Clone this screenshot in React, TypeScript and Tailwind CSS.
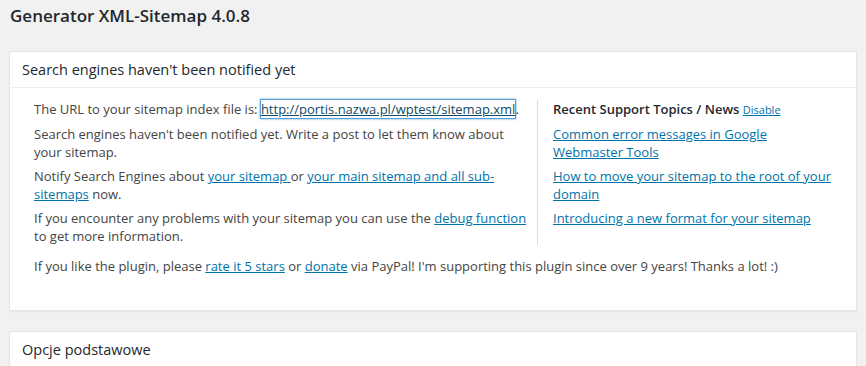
const linkCls = 'text-[#0073aa] underline';

function Postbox({ title, children }: { title: string; children?: React.ReactNode }) {
  return (
    <div className="mb-5 border border-[#e5e5e5] bg-white shadow-[0_1px_1px_rgba(0,0,0,0.04)]">
      <h2 className="border-b border-[#eee] px-3 py-[8px] text-[14.5px] leading-[19px] text-[#23282d]">
        {title}
      </h2>
      {children}
    </div>
  );
}

export default function App() {
  return (
    <div
      className="min-h-[366px] bg-[#f1f1f1] pl-[9px] pr-[9px] text-[13px] text-[#444]"
      style={{ fontFamily: '"Open Sans", "Liberation Sans", sans-serif' }}
    >
      <h1 className="pt-[4px] pb-[23px] pl-[1px] text-[17px] leading-[24px] font-semibold text-[#23282d]">
        Generator XML-Sitemap 4.0.8
      </h1>

      <Postbox title="Search engines haven't been notified yet">
        <div className="px-3 pt-[12px] pb-[35px]">
          <div className="flex">
            {/* left column */}
            <ul className="w-[515px] shrink-0 pl-3 pr-[7px] leading-[18px]">
              <li className="mb-[7px]">
                The URL to your sitemap index file is:{' '}
                <a className="text-[#124964] underline shadow-[0_0_0_1px_#5b9dd9,0_0_2px_1px_rgba(30,140,190,0.8)]">
                  http://portis.nazwa.pl/wptest/sitemap.xml
                </a>
                .
              </li>
              <li className="mb-[6px]">
                Search engines haven't been notified yet. Write a post to let them know about your sitemap.
              </li>
              <li className="mb-[6px]">
                Notify Search Engines about <a className={linkCls}>your sitemap </a> or{' '}
                <a className={linkCls}>your main sitemap and all sub-sitemaps</a> now.
              </li>
              <li>
                If you encounter any problems with your sitemap you can use the{' '}
                <a className={linkCls}>debug function</a> to get more information.
              </li>
            </ul>

            {/* right column */}
            <div className="flex-1 border-l border-[#ddd] pl-[15px] pr-[10px] leading-[18px]">
              <div className="mb-[6px] font-semibold text-[#23282d]">
                Recent Support Topics / News{' '}
                <a className="text-[11px] font-normal text-[#0073aa] underline">Disable</a>
              </div>
              <ul>
                <li className="mb-[6px]">
                  <a className={linkCls}>Common error messages in Google Webmaster Tools</a>
                </li>
                <li className="mb-[6px]">
                  <a className={linkCls}>How to move your sitemap to the root of your domain</a>
                </li>
                <li>
                  <a className={linkCls}>Introducing a new format for your sitemap</a>
                </li>
              </ul>
            </div>
          </div>

          <p className="mt-[12px] pl-3 leading-[18px]">
            If you like the plugin, please <a className={linkCls}>rate it 5 stars</a> or{' '}
            <a className={linkCls}>donate</a> via PayPal! I'm supporting this plugin since over 9 years! Thanks a
            lot! :)
          </p>
        </div>
      </Postbox>

      <Postbox title="Opcje podstawowe">
        <div className="h-[40px]" />
      </Postbox>
    </div>
  );
}
